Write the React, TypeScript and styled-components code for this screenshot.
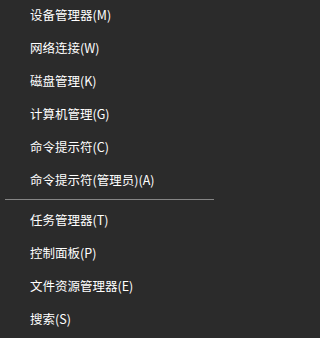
import React from 'react';
import styled, { createGlobalStyle } from 'styled-components';

const Global = createGlobalStyle`
  html, body {
    margin: 0;
    padding: 0;
    background: #2b2b2b;
  }
`;

const Menu = styled.div`
  width: 222px;
  height: 338px;
  overflow: hidden;
  background: #2b2b2b;
  display: flex;
  flex-direction: column;
  box-sizing: border-box;
  font-family: 'Microsoft YaHei', 'Noto Sans CJK SC', 'Liberation Sans', sans-serif;
  color: #ffffff;
  font-size: 12.5px;
  font-weight: 400;
`;

const Group = styled.div<{ $offset?: number }>`
  display: flex;
  flex-direction: column;
  margin-top: ${(p) => p.$offset ?? 0}px;
`;

const Item = styled.div`
  height: 33px;
  display: flex;
  align-items: center;
  padding-left: 30px;
  white-space: nowrap;
`;

const Separator = styled.div`
  height: 7px;
  display: flex;
  align-items: center;
  padding: 0 8px 0 5px;

  &::after {
    content: '';
    flex: 1;
    height: 1px;
    background: #858585;
  }
`;

const top = [
  '设备管理器(M)',
  '网络连接(W)',
  '磁盘管理(K)',
  '计算机管理(G)',
  '命令提示符(C)',
  '命令提示符(管理员)(A)',
];

const bottom = ['任务管理器(T)', '控制面板(P)', '文件资源管理器(E)', '搜索(S)'];

const App: React.FC = () => (
  <>
    <Global />
    <Menu>
      <Group $offset={-2}>
        {top.map((t) => (
          <Item key={t}>{t}</Item>
        ))}
      </Group>
      <Separator />
      <Group>
        {bottom.map((t) => (
          <Item key={t}>{t}</Item>
        ))}
      </Group>
    </Menu>
  </>
);

export default App;
